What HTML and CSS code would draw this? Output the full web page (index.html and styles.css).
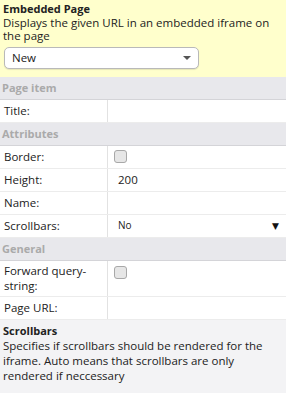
FILE: index.html
```html
<!DOCTYPE html>
<html lang="en">
<head>
    <meta charset="UTF-8">
    <title>Embedded Page</title>
    <link rel="stylesheet" href="styles.css">
</head>
<body>
    <div class="intro">
        <div class="intro-title">Embedded Page</div>
        <div class="intro-text">Displays the given URL in an embedded iframe on the page</div>
        <div class="mode-select">
            <span>New</span>
            <span class="caret"></span>
        </div>
    </div>

    <div class="section">Page item</div>
    <div class="row">
        <div class="label">Title:</div>
        <div class="value"></div>
    </div>

    <div class="section">Attributes</div>
    <div class="row">
        <div class="label">Border:</div>
        <div class="value"><span class="check"></span></div>
    </div>
    <div class="row">
        <div class="label">Height:</div>
        <div class="value">200</div>
    </div>
    <div class="row">
        <div class="label">Name:</div>
        <div class="value"></div>
    </div>
    <div class="row">
        <div class="label">Scrollbars:</div>
        <div class="value drop"><span>No</span><span class="arrow">&#9660;</span></div>
    </div>

    <div class="section">General</div>
    <div class="row tall">
        <div class="label">Forward query-string:</div>
        <div class="value top"><span class="check"></span></div>
    </div>
    <div class="row">
        <div class="label">Page URL:</div>
        <div class="value"></div>
    </div>

    <div class="help">
        <div class="help-title">Scrollbars</div>
        <div class="help-text">Specifies if scrollbars should be rendered for the iframe. Auto means that scrollbars are only rendered if neccessary</div>
    </div>
</body>
</html>
```

FILE: styles.css
```css
body {
    margin: 0;
    font-family: "Open Sans", "DejaVu Sans", sans-serif;
    font-size: 11.5px;
    color: #222;
    background-color: #f3f3f5;
}

.intro {
    background-color: #ffffcc;
    padding: 2px 3px 8px 3px;
    line-height: 13.5px;
}

.intro-title {
    font-weight: bold;
    font-size: 11px;
}

.mode-select {
    margin: 4px 0 0 1px;
    width: 195px;
    height: 22px;
    box-sizing: border-box;
    background-color: #fff;
    border: 1px solid #b9b9b9;
    border-radius: 5px;
    box-shadow: 0 1px 1px rgba(0,0,0,0.1);
    display: flex;
    align-items: center;
    justify-content: space-between;
    padding: 0 7px 0 7px;
}

.caret {
    width: 0;
    height: 0;
    border-left: 4px solid transparent;
    border-right: 4px solid transparent;
    border-top: 4px solid #555;
}

.section {
    background-color: #e8e8ec;
    color: #aaa;
    font-weight: bold;
    font-size: 11px;
    height: 22px;
    line-height: 22px;
    padding-left: 2px;
    border-bottom: 1px solid #d4d4d8;
}

.row {
    display: flex;
    background-color: #fff;
    border-bottom: 1px solid #ececec;
    min-height: 22px;
}

.label {
    width: 103px;
    padding: 1px 0 1px 4px;
    border-right: 1px solid #e2e2e2;
    line-height: 15px;
    display: flex;
    align-items: center;
}

.tall .label {
    padding: 2px 0 3px 4px;
}

.value {
    flex: 1;
    padding-left: 10px;
    line-height: 15px;
    display: flex;
    align-items: center;
}

.value.top {
    align-items: flex-start;
    padding-top: 5px;
}

.check {
    display: inline-block;
    width: 11px;
    height: 11px;
    margin-left: -4px;
    border: 1px solid #a8a8a8;
    border-radius: 3px;
    background-color: #e6e6e6;
}

.drop {
    justify-content: space-between;
    font-size: 10px;
    padding-right: 7px;
}

.arrow {
    font-size: 9px;
    color: #111;
}

.help {
    padding: 3px 3px 10px 3px;
    line-height: 15px;
}

.help-title {
    font-weight: bold;
    font-size: 11px;
}
```
